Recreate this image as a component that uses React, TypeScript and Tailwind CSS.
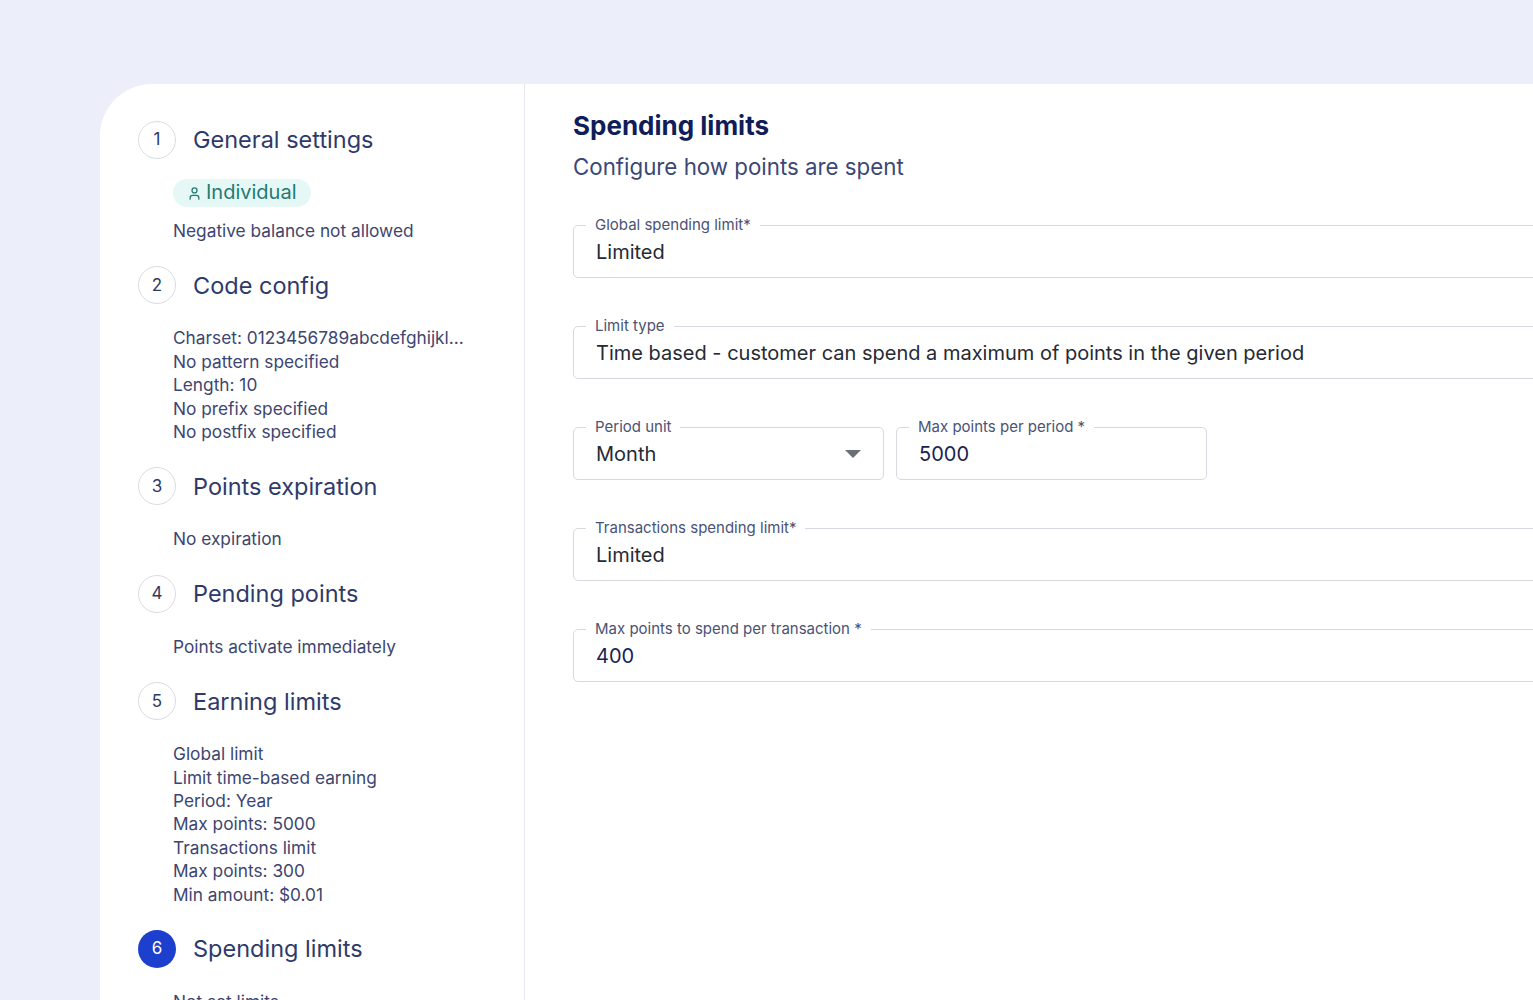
import { User } from "lucide-react";

const steps = [
  { n: 1, title: "General settings", lines: ["Negative balance not allowed"], badge: true },
  {
    n: 2,
    title: "Code config",
    lines: ["Charset: 0123456789abcdefghijkl...", "No pattern specified", "Length: 10", "No prefix specified", "No postfix specified"],
  },
  { n: 3, title: "Points expiration", lines: ["No expiration"] },
  { n: 4, title: "Pending points", lines: ["Points activate immediately"] },
  {
    n: 5,
    title: "Earning limits",
    lines: ["Global limit", "Limit time-based earning", "Period: Year", "Max points: 5000", "Transactions limit", "Max points: 300", "Min amount: $0.01"],
  },
  { n: 6, title: "Spending limits", lines: ["Not set limits"], active: true },
];

const Field = ({ label, value, className = "", select = false, navy = false }: { label: string; value: string; className?: string; select?: boolean; navy?: boolean }) => (
  <div className={`relative border border-[#d6d9e2] rounded-[5px] h-[53px] flex items-center justify-between pl-[22px] pr-[22px] ${className}`}>
    <span className="absolute -top-[10px] left-[12px] bg-white px-[9px] text-[15px] leading-[18px] text-[#4a5275]">{label}</span>
    <span className={`text-[20px] leading-[28px] ${navy ? "text-[#1a2350]" : "text-[#262a33]"}`}>{value}</span>
    {select && (
      <svg width="16" height="8" viewBox="0 0 16 8"><path d="M0 0h16L8 8z" fill="#6b6f78" /></svg>
    )}
  </div>
);

export default function App() {
  return (
    <div className="h-[1000px] overflow-hidden bg-[#eceefa] pt-[84px] pl-[100px]" style={{ fontFamily: "Inter, 'Noto Sans', sans-serif" }}>
      <div className="w-[1500px] h-[1000px] bg-white rounded-tl-[52px] flex">
        <aside className="w-[425px] shrink-0 border-r border-[#e6e8ee] pl-[38px] pt-[37px]">
          {steps.map((s) => (
            <div key={s.n} className="mb-[24px]">
              <div className="flex items-center gap-[17px] h-[38px]">
                <div
                  className={`w-[38px] h-[38px] rounded-full flex items-center justify-center text-[17px] ${
                    s.active ? "bg-[#1d3fce] text-white" : "border border-[#dadce3] text-[#2f3a63]"
                  }`}
                >
                  {s.n}
                </div>
                <span className="text-[23.5px] text-[#2e3a6a]">{s.title}</span>
              </div>
              <div className="pl-[35px] mt-[22px] text-[17.3px] leading-[23.4px] text-[#3d4570]">
                {s.badge && (
                  <div className="inline-flex items-center gap-[4px] bg-[#e6f8f6] text-[#1f7a72] rounded-full h-[28px] px-[14px] text-[20px] mb-[12px] -mt-[2px]">
                    <User size={15} strokeWidth={2} />
                    Individual
                  </div>
                )}
                {s.lines.map((l) => (
                  <div key={l}>{l}</div>
                ))}
              </div>
            </div>
          ))}
        </aside>
        <main className="flex-1 pl-[48px] pt-[26px]">
          <h1 className="text-[26px] font-bold text-[#0f1d5a] leading-[32px]">Spending limits</h1>
          <p className="text-[22.3px] text-[#3b4776] mt-[10px] leading-[30px]">Configure how points are spent</p>
          <div className="mt-[43px] flex flex-col gap-[48px]">
            <Field label="Global spending limit*" value="Limited" />
            <Field label="Limit type" value="Time based - customer can spend a maximum of points in the given period" />
            <div className="flex gap-[12px]">
              <Field label="Period unit" value="Month" select className="w-[311px]" />
              <Field label="Max points per period *" value="5000" navy className="w-[311px]" />
            </div>
            <Field label="Transactions spending limit*" value="Limited" />
            <Field label="Max points to spend per transaction *" value="400" navy />
          </div>
        </main>
      </div>
    </div>
  );
}
